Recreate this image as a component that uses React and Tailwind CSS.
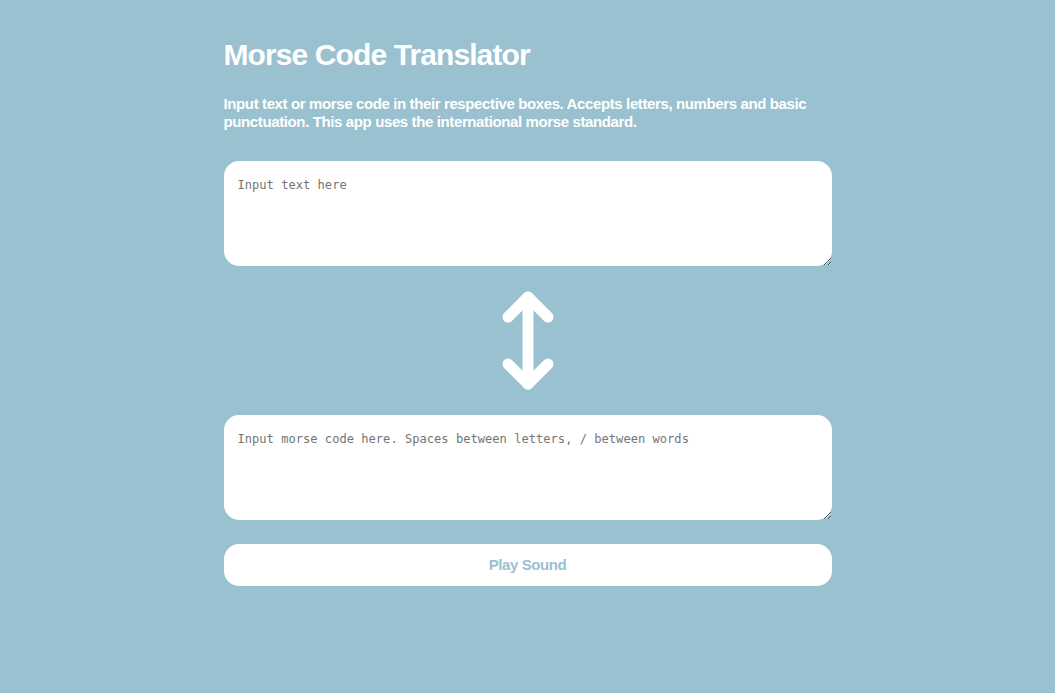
export default function App() {
  return (
    <div className="min-h-[693px] w-full bg-[#9ac1cf] font-['Liberation_Sans',Arial,sans-serif]">
      <div className="mx-auto w-[608px] pt-[36px]">
        <h1 className="text-[30px] leading-[38px] font-bold tracking-[-0.9px] text-white">Morse Code Translator</h1>
        <p className="mt-[21px] text-[15px] leading-[18px] font-bold tracking-[-0.38px] text-white">
          Input text or morse code in their respective boxes. Accepts letters, numbers and basic punctuation. This app uses the international morse standard.
        </p>
        <textarea
          className="mt-[30px] block h-[105px] w-full rounded-[15px] bg-white px-[14px] pt-[17px] pb-[16px] font-['DejaVu_Sans_Mono',monospace] text-[12.1px] leading-[14px] text-gray-700 placeholder:text-[#757575] outline-none"
          placeholder="Input text here"
        />
        <div className="flex justify-center py-[24px]">
          <svg width="52" height="101" viewBox="0 0 52 101" fill="none" stroke="white" strokeWidth="11" strokeLinecap="round" strokeLinejoin="round">
            <path d="M26 7 L26 94" />
            <path d="M6 27 L26 7 L46 27" />
            <path d="M6 74 L26 94 L46 74" />
          </svg>
        </div>
        <textarea
          className="block h-[105px] w-full rounded-[15px] bg-white px-[14px] pt-[17px] pb-[16px] font-['DejaVu_Sans_Mono',monospace] text-[12.1px] leading-[14px] text-gray-700 placeholder:text-[#757575] outline-none"
          placeholder="Input morse code here. Spaces between letters, / between words"
        />
        <button className="mt-[24px] block h-[42px] w-full rounded-[15px] bg-white text-[15px] font-bold tracking-[-0.4px] text-[#9ac1cf]">
          Play Sound
        </button>
      </div>
    </div>
  );
}
